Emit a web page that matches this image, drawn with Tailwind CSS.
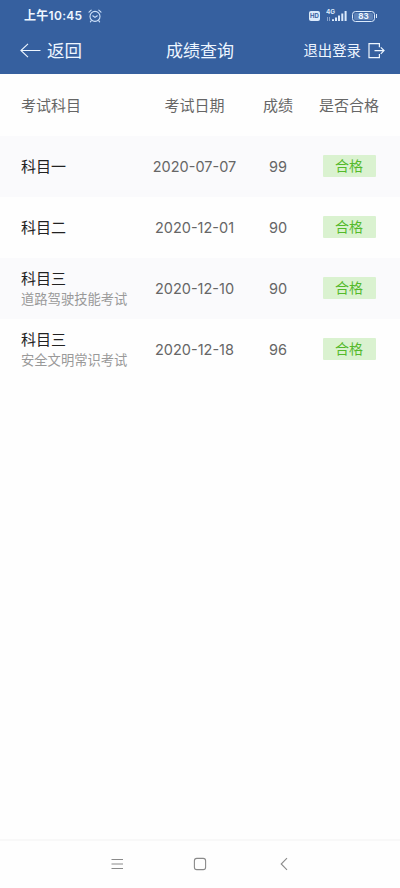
<!DOCTYPE html>
<html lang="zh-CN">
<head>
    <meta charset="UTF-8">
    <meta name="viewport" content="width=device-width, initial-scale=1.0">
    <title>成绩查询</title>
    <script src="https://cdn.jsdelivr.net/npm/@tailwindcss/browser@4"></script>
    <style>
        body {
            font-family: 'Inter', 'Noto Sans CJK SC', sans-serif;
        }
    </style>
</head>
<body class="h-[888px] overflow-hidden bg-[#fefefe] flex flex-col text-[#666]">

    <header class="h-[74px] shrink-0 bg-[#36609f] text-[#eef6ff]">
        <!-- Status bar -->
        <div class="h-8 flex items-center pl-6 pr-[23px]">
            <span class="text-[12px] leading-4 font-semibold tracking-[0.3px] whitespace-nowrap">上午10:45</span>
            <svg class="ml-[6px] w-[14px] h-[14px]" viewBox="0 0 14 14" fill="none" stroke="#cfe2fb" stroke-width="1.1" stroke-linecap="round">
                <circle cx="7" cy="7.4" r="5"/>
                <path d="M4.8 6.8 7 8.4 9.3 6.8M1 3.2 3.2 1.2M13 3.2 10.8 1.2M3.3 11.6 2.4 12.8M10.7 11.6 11.6 12.8"/>
            </svg>

            <div class="ml-auto flex items-center">
                <span class="w-[11px] h-[10px] rounded-[2px] bg-[#dbeafc] text-[#36609f] text-[6px] leading-[10px] font-bold text-center">HD</span>
                <svg class="ml-[6px] w-[22px] h-[14px]" viewBox="0 0 22 14" fill="#dbeafc">
                    <text x="0" y="5.4" font-size="6.4" font-weight="700">4G</text>
                    <path d="M1 8h.9v4H1zM3 8h.9v4H3z" opacity=".55"/>
                    <path d="M6 10.2h2V12H6zM9 8.6h2V12H9zM12 6.6h2V12h-2zM15.3 4.4h2V12h-2zM18.6 2h2v10h-2z"/>
                </svg>
                <div class="ml-[4px] w-[23px] h-[11px] rounded-[3.5px] border border-[#dbeafc] p-px">
                    <div class="h-full rounded-[1.5px] bg-[#5e82b7] text-[8px] leading-[7px] font-bold text-center">83</div>
                </div>
                <span class="ml-px w-px h-[4px] bg-[#dbeafc]"></span>
            </div>
        </div>

        <!-- Title bar -->
        <div class="h-[37px] grid grid-cols-[1fr_auto_1fr] items-center pl-5 pr-[15px]">
            <div class="flex items-center gap-[6px]">
                <svg class="w-[21px] h-[16px]" viewBox="0 0 21 16" fill="none" stroke="currentColor" stroke-width="1.1">
                    <path d="M20.5 7.5H1M8 .8 .9 7.5 8 14.2"/>
                </svg>
                <span class="text-[17.5px] leading-6">返回</span>
            </div>
            <h1 class="text-[17px] leading-6 -ml-[5px]">成绩查询</h1>
            <div class="flex items-center justify-end gap-[7px]">
                <span class="text-[14.4px] leading-6 pt-px">退出登录</span>
                <svg class="w-[17px] h-[16px]" viewBox="0 0 17 16" fill="none" stroke="currentColor" stroke-width="1.2">
                    <path d="M11.4 4.2V.6H1v14h10.4V11M6.5 7.6h9.4M12.8 4.4 16 7.6l-3.2 3.2"/>
                </svg>
            </div>
        </div>
    </header>

    <!-- Results table -->
    <main class="flex-1 text-[15px]">
        <div class="h-[62px] pt-0.5 grid grid-cols-[152px_85px_82px_60px] items-center text-center">
            <div class="pl-[21px] text-left">考试科目</div>
            <div>考试日期</div>
            <div>成绩</div>
            <div>是否合格</div>
        </div>

        <div class="h-[61px] grid grid-cols-[152px_85px_82px_60px] items-center text-center bg-[#fafafc]">
            <div class="pl-[21px] pt-px text-left text-[#222]">科目一</div>
            <div class="text-[14.5px] whitespace-nowrap flex justify-center">2020-07-07</div>
            <div class="text-[14.5px]">99</div>
            <div class="mx-auto mb-0.5 w-[53px] h-[22px] rounded-[1px] bg-[#daf2d0] text-[14px] leading-[22px] text-[#54b92b]">合格</div>
        </div>

        <div class="h-[61px] grid grid-cols-[152px_85px_82px_60px] items-center text-center">
            <div class="pl-[21px] pt-px text-left text-[#222]">科目二</div>
            <div class="text-[14.5px] whitespace-nowrap flex justify-center">2020-12-01</div>
            <div class="text-[14.5px]">90</div>
            <div class="mx-auto mb-0.5 w-[53px] h-[22px] rounded-[1px] bg-[#daf2d0] text-[14px] leading-[22px] text-[#54b92b]">合格</div>
        </div>

        <div class="h-[61px] grid grid-cols-[152px_85px_82px_60px] items-center text-center bg-[#fafafc]">
            <div class="pl-[21px] text-left">
                <div class="leading-5 text-[#222]">科目三</div>
                <div class="text-[13.3px] leading-5 text-[#999] whitespace-nowrap">道路驾驶技能考试</div>
            </div>
            <div class="text-[14.5px] whitespace-nowrap flex justify-center">2020-12-10</div>
            <div class="text-[14.5px]">90</div>
            <div class="mx-auto mb-0.5 w-[53px] h-[22px] rounded-[1px] bg-[#daf2d0] text-[14px] leading-[22px] text-[#54b92b]">合格</div>
        </div>

        <div class="h-[61px] grid grid-cols-[152px_85px_82px_60px] items-center text-center">
            <div class="pl-[21px] text-left">
                <div class="leading-5 text-[#222]">科目三</div>
                <div class="text-[13.3px] leading-5 text-[#999] whitespace-nowrap">安全文明常识考试</div>
            </div>
            <div class="text-[14.5px] whitespace-nowrap flex justify-center">2020-12-18</div>
            <div class="text-[14.5px]">96</div>
            <div class="mx-auto mb-0.5 w-[53px] h-[22px] rounded-[1px] bg-[#daf2d0] text-[14px] leading-[22px] text-[#54b92b]">合格</div>
        </div>
    </main>

    <!-- System navigation -->
    <nav class="h-[49px] shrink-0 border-t-2 border-[#f8f8f8] pb-0.5 grid grid-cols-[83px_83px_84px] justify-center items-center justify-items-center text-[#8a8a8a]">
        <svg class="w-[14px] h-[14px]" viewBox="0 0 14 14" fill="none" stroke="currentColor" stroke-width="1">
            <path d="M1.5 2.5h11.5M1.5 7h11.5M1.5 11.5h11.5"/>
        </svg>
        <svg class="w-[14px] h-[14px]" viewBox="0 0 14 14" fill="none" stroke="currentColor" stroke-width="1.1">
            <rect x="1.4" y="1.4" width="11.2" height="11.2" rx="2.4"/>
        </svg>
        <svg class="w-[14px] h-[14px]" viewBox="0 0 14 14" fill="none" stroke="currentColor" stroke-width="1.1">
            <path d="M11 1.2 5.2 7l5.8 5.8"/>
        </svg>
    </nav>
</body>
</html>
